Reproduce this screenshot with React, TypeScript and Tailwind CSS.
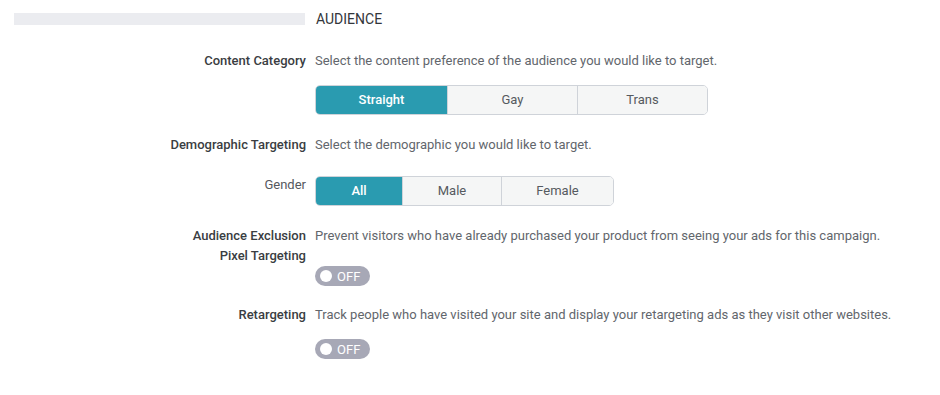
import React, { useState } from "react";

const font = { fontFamily: "Roboto, 'Liberation Sans', sans-serif" };

type SegProps = {
  options: string[];
  value: string;
  onChange: (v: string) => void;
  widths: string[];
};

const Segmented: React.FC<SegProps> = ({ options, value, onChange, widths }) => {
  return (
    <div className="flex h-[30px] rounded-[5px] border border-[#cfd3d9] overflow-hidden w-max">
      {options.map((opt, i) => {
        const active = opt === value;
        return (
          <button
            key={opt}
            onClick={() => onChange(opt)}
            className={`${widths[i]} h-full text-[13px] ${
              i > 0 ? "border-l border-[#cfd3d9]" : ""
            } ${active ? "bg-[#2a9bb0] text-white font-medium" : "bg-[#f5f6f6] text-[#555a60]"}`}
          >
            {opt}
          </button>
        );
      })}
    </div>
  );
};

const Toggle: React.FC = () => {
  const [on, setOn] = useState(false);
  return (
    <button
      onClick={() => setOn(!on)}
      className={`flex items-center h-[20px] w-[55px] rounded-full pl-[5px] ${on ? "bg-[#2a9bb0]" : "bg-[#a7a8b6]"}`}
    >
      <span className="block w-[12px] h-[12px] rounded-full bg-white" />
      <span className="ml-[5px] text-[13px] text-white leading-none">{on ? "ON" : "OFF"}</span>
    </button>
  );
};

const Row: React.FC<{ label: React.ReactNode; children: React.ReactNode; className?: string }> = ({
  label,
  children,
  className,
}) => (
  <div className={`flex ${className ?? ""}`}>
    <div className="w-[306px] shrink-0 text-right text-[13px] leading-[20px] font-medium text-[#3a3d42]">
      {label}
    </div>
    <div className="pl-[9px] flex-1">{children}</div>
  </div>
);

export default function App() {
  const [category, setCategory] = useState("Straight");
  const [gender, setGender] = useState("All");

  return (
    <div className="w-[940px] h-[395px] bg-white" style={font}>
      <div className="flex items-center pt-[9px]">
        <div className="ml-[14px] w-[291px] h-[12px] bg-[#ebecf0]" />
        <div className="ml-[11px] text-[14px] leading-[20px] text-[#33363b]">AUDIENCE</div>
      </div>

      <Row label="Content Category" className="mt-[22px]">
        <p className="text-[13px] leading-[20px] text-[#62666c]">
          Select the content preference of the audience you would like to target.
        </p>
        <div className="mt-[14px]">
          <Segmented
            options={["Straight", "Gay", "Trans"]}
            value={category}
            onChange={setCategory}
            widths={["w-[131px]", "w-[130px]", "w-[130px]"]}
          />
        </div>
      </Row>

      <Row label="Demographic Targeting" className="mt-[20px]">
        <p className="text-[13px] leading-[20px] text-[#62666c]">
          Select the demographic you would like to target.
        </p>
      </Row>

      <Row label={<span className="font-normal text-[#55585e]">Gender</span>} className="mt-[20px]">
        <div className="mt-[1px]">
          <Segmented
            options={["All", "Male", "Female"]}
            value={gender}
            onChange={setGender}
            widths={["w-[86px]", "w-[99px]", "w-[112px]"]}
          />
        </div>
      </Row>

      <Row
        label={
          <>
            Audience Exclusion
            <br />
            Pixel Targeting
          </>
        }
        className="mt-[20px]"
      >
        <p className="text-[13px] leading-[20px] text-[#62666c]">
          Prevent visitors who have already purchased your product from seeing your ads for this campaign.
        </p>
        <div className="mt-[20px]">
          <Toggle />
        </div>
      </Row>

      <Row label="Retargeting" className="mt-[19px]">
        <p className="text-[13px] leading-[20px] text-[#62666c]">
          Track people who have visited your site and display your retargeting ads as they visit other websites.
        </p>
        <div className="mt-[14px]">
          <Toggle />
        </div>
      </Row>
    </div>
  );
}
